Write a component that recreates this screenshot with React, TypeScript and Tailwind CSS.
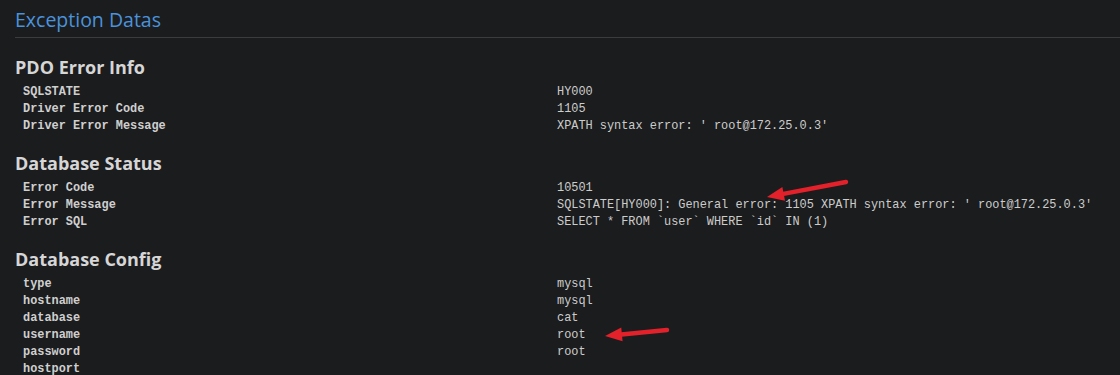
const sections: { title: string; rows: [string, string][] }[] = [
  {
    title: "PDO Error Info",
    rows: [
      ["SQLSTATE", "HY000"],
      ["Driver Error Code", "1105"],
      ["Driver Error Message", "XPATH syntax error: ' root@172.25.0.3'"],
    ],
  },
  {
    title: "Database Status",
    rows: [
      ["Error Code", "10501"],
      ["Error Message", "SQLSTATE[HY000]: General error: 1105 XPATH syntax error: ' root@172.25.0.3'"],
      ["Error SQL", "SELECT * FROM `user` WHERE `id` IN (1)"],
    ],
  },
  {
    title: "Database Config",
    rows: [
      ["type", "mysql"],
      ["hostname", "mysql"],
      ["database", "cat"],
      ["username", "root"],
      ["password", "root"],
      ["hostport", ""],
    ],
  },
];

function Arrow({ x1, y1, x2, y2 }: { x1: number; y1: number; x2: number; y2: number }) {
  const a = Math.atan2(y2 - y1, x2 - x1);
  const len = 17;
  const w = 7;
  const bx = x2 - Math.cos(a) * len;
  const by = y2 - Math.sin(a) * len;
  const px = -Math.sin(a) * w;
  const py = Math.cos(a) * w;
  return (
    <g>
      <line x1={x1} y1={y1} x2={bx + Math.cos(a) * 3} y2={by + Math.sin(a) * 3} stroke="#e3212b" strokeWidth={4.5} strokeLinecap="round" />
      <polygon points={`${x2},${y2} ${bx + px},${by + py} ${bx - px},${by - py}`} fill="#e3212b" />
    </g>
  );
}

export default function App() {
  return (
    <div className="relative h-[375px] w-[1120px] overflow-hidden bg-[#1b1c1e] pl-[15px] pt-[9px]">
      <h1 className="border-b border-[#3b3c3f] pb-[6px] font-['Open_Sans',sans-serif] text-[19.5px] leading-[22px] text-[#4a93dc]">
        Exception Datas
      </h1>

      {sections.map((s, i) => (
        <section key={s.title} className={i === 0 ? "mt-[19px]" : "mt-[18px]"}>
          <h2 className="mb-[7px] font-['Open_Sans',sans-serif] text-[18px] leading-[20px] font-bold text-[#d6d6d6]">
            {s.title}
          </h2>
          <div className="pl-[8px] font-['Liberation_Mono',monospace] text-[11.9px] leading-[17px]">
            {s.rows.map(([k, v]) => (
              <div key={k} className="grid grid-cols-[534px_1fr]">
                <span className="font-bold text-[#cfcfcf]">{k}</span>
                <span className="text-[#cccccc]">{v}</span>
              </div>
            ))}
          </div>
        </section>
      ))}

      <svg className="pointer-events-none absolute left-0 top-0" width={1120} height={375}>
        <Arrow x1={846} y1={182} x2={767} y2={197} />
        <Arrow x1={667} y1={330} x2={605} y2={336} />
      </svg>
    </div>
  );
}
